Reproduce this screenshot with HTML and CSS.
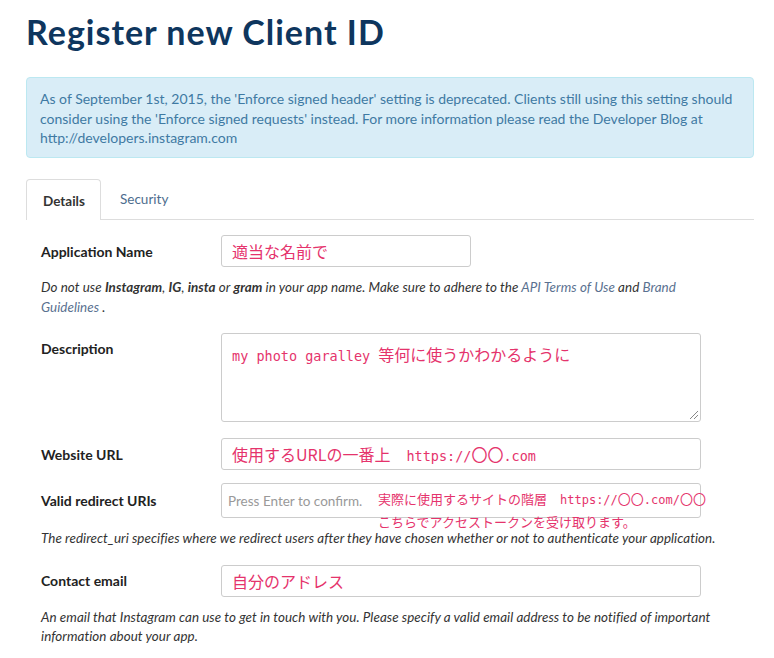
FILE: index.html
```html
<!DOCTYPE html>
<html lang="en">
<head>
  <meta charset="UTF-8">
  <meta name="viewport" content="width=device-width, initial-scale=1.0">
  <title>Register new Client ID</title>
  <link rel="stylesheet" href="styles.css">
</head>
<body>
  <div class="page">
    <h1>Register new Client ID</h1>

    <div class="alert">
      As of September 1st, 2015, the 'Enforce signed header' setting is deprecated. Clients still using this setting should consider using the 'Enforce signed requests' instead. For more information please read the Developer Blog at http://developers.instagram.com
    </div>

    <ul class="tabs">
      <li class="tab active">Details</li>
      <li class="tab">Security</li>
    </ul>

    <div class="form">
      <div class="form-row">
        <label class="label">Application Name</label>
        <div class="field field-short"><span class="memo">適当な名前で</span></div>
      </div>
      <p class="help">Do not use <b>Instagram</b>, <b>IG</b>, <b>insta</b> or <b>gram</b> in your app name. Make sure to adhere to the <a>API Terms of Use</a> and <a>Brand Guidelines</a> .</p>

      <div class="form-row top">
        <label class="label label-top">Description</label>
        <div class="field area"><span class="memo"><span class="lat">my photo garalley </span>等何に使うかわかるように</span><span class="grip"></span></div>
      </div>

      <div class="form-row url">
        <label class="label">Website URL</label>
        <div class="field"><span class="memo">使用するURLの一番上　<span class="lat">https://</span>〇〇<span class="lat">.com</span></span></div>
      </div>

      <div class="form-row">
        <label class="label">Valid redirect URIs</label>
        <div class="field field-tall">
          <span class="placeholder">Press Enter to confirm.</span>
          <div class="note">実際に使用するサイトの階層　<span class="lat">https://</span>〇〇<span class="lat">.com/</span>〇〇<br>こちらでアクセストークンを受け取ります。</div>
        </div>
      </div>
      <p class="help">The redirect_uri specifies where we redirect users after they have chosen whether or not to authenticate your application.</p>

      <div class="form-row">
        <label class="label">Contact email</label>
        <div class="field"><span class="memo">自分のアドレス</span></div>
      </div>
      <p class="help">An email that Instagram can use to get in touch with you. Please specify a valid email address to be notified of important information about your app.</p>
    </div>
  </div>
</body>
</html>
```

FILE: styles.css
```css
body {
  margin: 0;
  font-family: Lato, "Open Sans", Arial, sans-serif;
  color: #333;
  background: #fff;
}
.page {
  width: 728px;
  padding: 0 0 0 26px;
}
h1 {
  margin: 0;
  padding-top: 11px;
  height: 66px;
  font-size: 34px;
  font-weight: 700;
  color: #0e365e;
  letter-spacing: 1px;
}
.alert {
  box-sizing: border-box;
  height: 81px;
  padding: 11px 13px;
  background-color: #d9edf7;
  border: 1px solid #bce8f1;
  border-radius: 4px;
  color: #3f7aa3;
  font-size: 14px;
  line-height: 19.6px;
}
.tabs {
  list-style: none;
  margin: 21px 0 0;
  padding: 0;
  display: flex;
  border-bottom: 1px solid #ddd;
  height: 40px;
}
.tab {
  box-sizing: border-box;
  height: 41px;
  padding: 11px 15px 0 16px;
  font-size: 13.5px;
  color: #4d6d8e;
  border: 1px solid transparent;
  border-bottom: none;
  margin-right: 2px;
}
.tab.active {
  width: 75px;
  color: #333;
  font-weight: 700;
  background: #fff;
  border-color: #ddd;
  border-radius: 4px 4px 0 0;
  padding-top: 13px;
}
.form {
  padding: 15px 0 0 15px;
}
.form-row {
  display: flex;
  align-items: center;
  margin-bottom: 16px;
}
.form-row.top {
  align-items: flex-start;
}
.form-row.url {
  margin-bottom: 13px;
}
.label {
  width: 180px;
  flex: none;
  font-size: 14px;
  font-weight: 700;
  color: #222;
}
.label-top {
  padding-top: 7px;
}
.field {
  position: relative;
  box-sizing: border-box;
  width: 480px;
  height: 32px;
  border: 1px solid #ccc;
  border-radius: 3px;
  padding: 0 10px;
  display: flex;
  align-items: center;
}
.field-short {
  width: 250px;
}
.field.area {
  height: 89px;
  align-items: flex-start;
  padding-top: 8px;
}
.field-tall {
  height: 35px;
  padding-left: 6px;
}
.memo {
  font-family: "Noto Sans CJK JP", sans-serif;
  font-size: 16px;
  color: #e5336c;
  white-space: nowrap;
}
.lat {
  font-family: "DejaVu Sans Mono", monospace;
  font-size: 13.5px;
}
.note .lat {
  font-size: 12px;
}
.placeholder {
  font-size: 13.5px;
  color: #999;
}
.note {
  position: absolute;
  left: 156px;
  top: 4px;
  font-family: "Noto Sans CJK JP", sans-serif;
  font-size: 13px;
  line-height: 21px;
  color: #e5336c;
  white-space: nowrap;
}
.grip {
  position: absolute;
  right: 2px;
  bottom: 2px;
  width: 8px;
  height: 8px;
  background: linear-gradient(135deg, transparent 45%, #888 45%, #888 52%, transparent 52%, transparent 70%, #888 70%, #888 77%, transparent 77%);
}
.help {
  max-width: 690px;
  margin: 0 0 16px;
  font-size: 13.4px;
  font-style: italic;
  letter-spacing: 0.05px;
  line-height: 19.5px;
  color: #333;
}
.form-row + .help {
  margin-top: -5px;
}
.help a {
  color: #5a7190;
}
```
